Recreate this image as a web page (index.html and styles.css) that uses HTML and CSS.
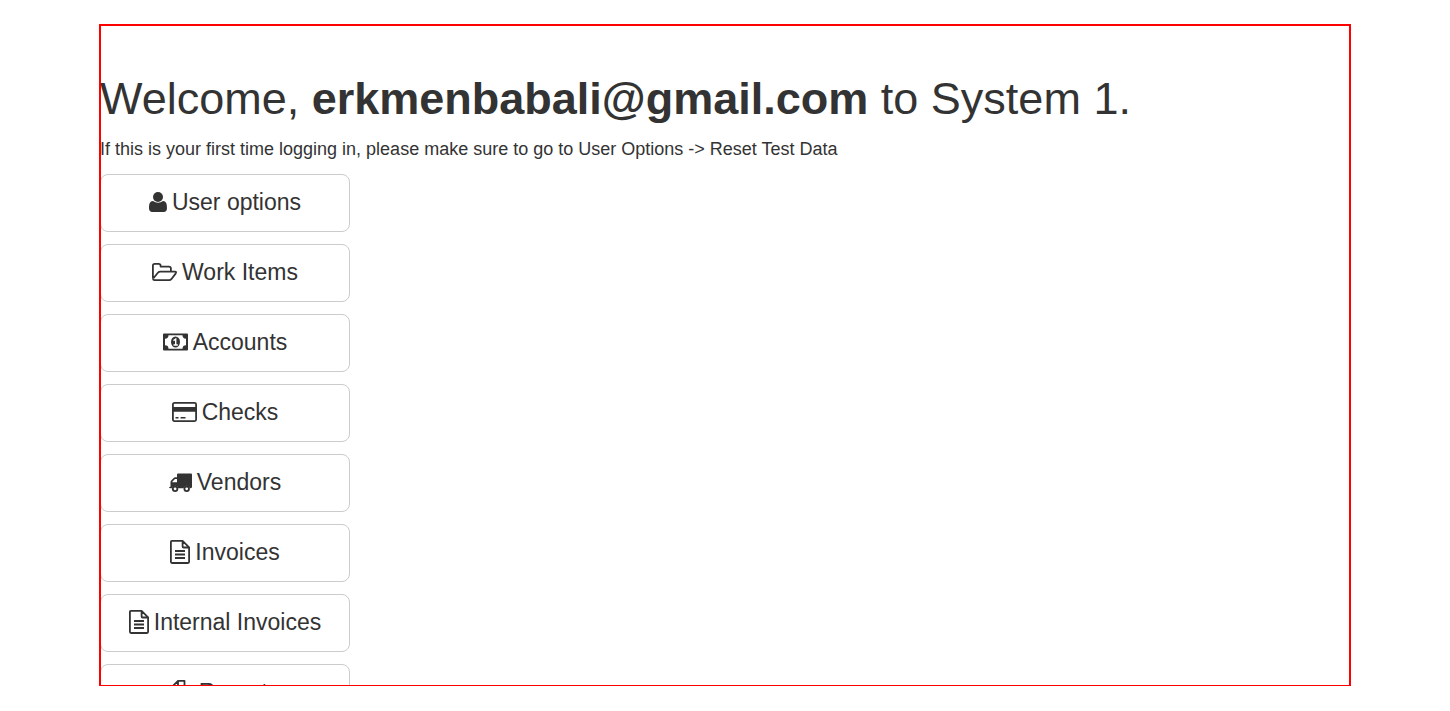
FILE: index.html
```html
<!DOCTYPE html>
<html lang="en">
<head>
<meta charset="utf-8">
<title>System 1</title>
<meta name="viewport" content="width=device-width, initial-scale=1">
<link rel="stylesheet" href="styles.css">
</head>
<body>
<main class="frame">
  <h1 class="title">Welcome, <strong>erkmenbabali@gmail.com</strong> to System 1.</h1>
  <p class="hint">If this is your first time logging in, please make sure to go to User Options -&gt; Reset Test Data</p>
  <nav class="menu" aria-label="Main menu">
    <button class="item" type="button">
      <svg class="icon" width="18" height="20" viewBox="0 0 18 20" aria-hidden="true"><circle cx="9" cy="5" r="5" fill="currentColor"/><path fill="currentColor" d="M4 9Q6.300 10.800 9 10.800T14 9C17.200 9 18 12 18 16.200C18 18.600 16.700 20 14.800 20H3.200C1.300 20 0 18.600 0 16.200C0 12 .8 9 4 9Z"/></svg>
      <span>User options</span>
    </button>
    <button class="item" type="button">
      <svg class="icon" width="25" height="18" viewBox="0 0 25 18" aria-hidden="true"><path class="line" d="M.9 15.500V2.800Q.9.900 2.800.9H6.600Q8.600.900 8.600 2.800V3.600H16.900Q18.900 3.600 18.900 5.600V8.500M.9 15.700Q1.100 17.100 2.600 17.100H17.200Q18.500 17.100 19.300 16.200L23.600 10.600Q24.800 8.600 23 8.600H8.300Q6.800 8.600 5.900 9.700L1.400 15.200Q.9 15.900.900 15.700"/></svg>
      <span>Work Items</span>
    </button>
    <button class="item" type="button">
      <svg class="icon" width="25" height="18" viewBox="0 0 25 18" aria-hidden="true"><path fill="currentColor" fill-rule="evenodd" d="M1 .5H24Q25 .5 25 1.500V16.500Q25 17.500 24 17.500H1Q0 17.500 0 16.500V1.500Q0 .5 1 .5ZM5.500 2.300Q5.500 5.700 2 5.700V12.300Q5.500 12.300 5.500 15.700H19.500Q19.500 12.300 23 12.300V5.700Q19.500 5.700 19.500 2.300Z"/><ellipse cx="12.500" cy="9" rx="4.500" ry="5.500" fill="currentColor"/><path fill="none" stroke="#fff" stroke-width="1.400" d="M10.500 7.600L12.700 6V11.700M10.500 12H14.800"/></svg>
      <span>Accounts</span>
    </button>
    <button class="item" type="button">
      <svg class="icon" width="25" height="20" viewBox="0 0 25 20" aria-hidden="true"><rect class="line" x=".9" y=".9" width="23.200" height="18.200" rx="1.500"/><path fill="currentColor" d="M1 5H24V9.800H1ZM3.500 15H6.500V16.600H3.500ZM8.500 15H13.500V16.600H8.500Z"/></svg>
      <span>Checks</span>
    </button>
    <button class="item" type="button">
      <svg class="icon" width="23" height="19" viewBox="0 0 23 19" aria-hidden="true"><path fill="currentColor" fill-rule="evenodd" d="M9 .5H22Q23 .5 23 1.500V14Q23 15.300 20.900 15.300A3.300 3.300 0 0 0 14.500 15.300H9.300A3.300 3.300 0 0 0 2.900 15.300Q0 15.500 0 14.500Q0 13.800 1.500 13.800V9Q1.500 8.200 2.200 7.500L4.700 4.900Q5.300 4.300 6.200 4.300H8V1.500Q8 .5 9 .5ZM8 6H6L3.300 8.800V9.300H8Z"/><g fill="#fff" stroke="currentColor" stroke-width="1.800"><circle cx="6.100" cy="15.800" r="2.300"/><circle cx="17.700" cy="15.800" r="2.300"/></g></svg>
      <span>Vendors</span>
    </button>
    <button class="item" type="button">
      <svg class="icon" width="20" height="24" viewBox="0 0 20 24" aria-hidden="true"><path class="line" d="M2 .9H12.600L19.100 7.400V21.800Q19.100 23 18 23H2Q.9 23 .9 21.800V2.100Q.9.900 2 .9ZM12.600 1V6.500Q12.600 7.500 13.600 7.500H19M5 11H15M5 14.500H15M5 18H15"/></svg>
      <span>Invoices</span>
    </button>
    <button class="item" type="button">
      <svg class="icon" width="20" height="24" viewBox="0 0 20 24" aria-hidden="true"><path class="line" d="M2 .9H12.600L19.100 7.400V21.800Q19.100 23 18 23H2Q.9 23 .9 21.800V2.100Q.9.900 2 .9ZM12.600 1V6.500Q12.600 7.500 13.600 7.500H19M5 11H15M5 14.500H15M5 18H15"/></svg>
      <span>Internal Invoices</span>
    </button>
    <button class="item" type="button">
      <svg class="icon" width="23" height="24" viewBox="0 0 23 24" aria-hidden="true"><path class="line" d="M9 17.500H.9V7L7 .9H13.500V6M7 1V7H1M15.500 6H22.100V22.700H9V12.500L15.500 6V12.500H9"/></svg>
      <span>Reports</span>
    </button>
  </nav>
</main>
</body>
</html>
```
FILE: styles.css
```css
* {
  box-sizing: border-box;
}

body {
  margin: 0;
  height: 100vh;
  padding: 24px 99px 25px;
  background: #fff;
  color: #333;
  font-family: "Liberation Sans", Arial, sans-serif;
}

.frame {
  position: relative;
  height: 100%;
  padding: 50px 1px 0;
  overflow: hidden;
}

/* The outline is painted over the content edges. */
.frame::after {
  content: "";
  position: absolute;
  inset: 0;
  border: 2px solid #f00;
  border-bottom-width: 1px;
  pointer-events: none;
}

.title {
  margin: 0 0 13px;
  font-size: 45px;
  font-weight: 400;
  line-height: 50px;
}

.hint {
  margin: 0 0 12px;
  font-size: 18px;
  line-height: 25px;
}

.menu {
  display: flex;
  flex-direction: column;
  align-items: flex-start;
  gap: 12px;
}

.item {
  display: flex;
  align-items: center;
  justify-content: center;
  gap: 5px;
  width: 250px;
  padding: 12px 16px 14px;
  border: 1px solid #ccc;
  border-radius: 8px;
  background: #fff;
  color: #333;
  font-family: inherit;
  font-size: 23px;
  line-height: 30px;
  white-space: nowrap;
}

.icon {
  flex: none;
}

.line {
  fill: none;
  stroke: currentColor;
  stroke-width: 1.8;
  stroke-linejoin: round;
}
```
